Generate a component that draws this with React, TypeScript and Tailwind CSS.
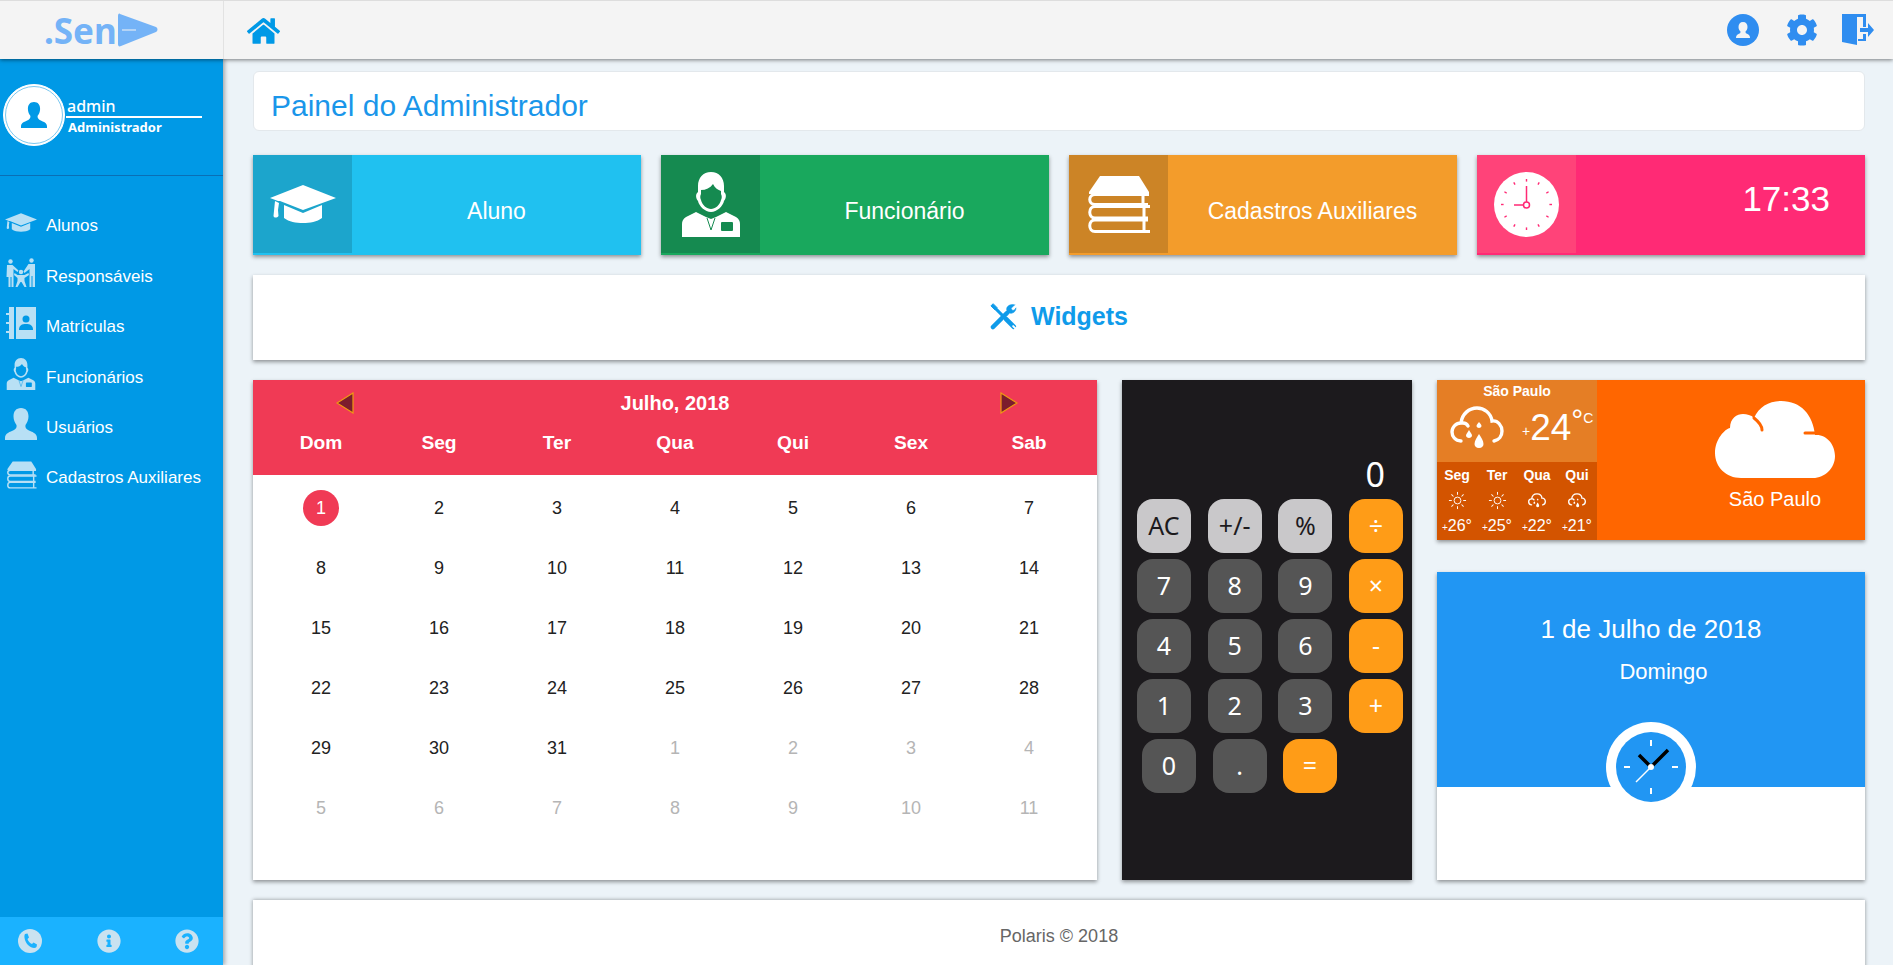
import { FaHome, FaCog, FaInfoCircle, FaQuestionCircle } from "react-icons/fa";

type IconProps = { className?: string };

function CapIcon({ className }: IconProps) {
  return (
    <svg viewBox="0 0 66 38" className={className} fill="currentColor">
      <path d="M33 0 66 13 33 25 10 16 8 16 0 13Z" />
      <path d="M5 16 9 18 8 25 8.5 31C7 33 4 33 3.5 31Z" />
      <path d="M14 20 33 28 52 20V33C47 37 40 38 33 38S19 37 14 33Z" />
    </svg>
  );
}

function FamilyIcon({ className }: IconProps) {
  return (
    <svg viewBox="0 0 31 30" className={className} fill="currentColor">
      <circle cx="5" cy="3.5" r="2.2" />
      <circle cx="26" cy="2.5" r="2.2" />
      <circle cx="15.5" cy="14" r="2.2" />
      <path d="M1.5 7H7L13 12.5 12 14 8 11V29H6V19H5V29H3V19H1Z" />
      <path d="M23 6H29.5V29H27V18H26V29H24V11L19 15 18 13.5Z" />
      <path d="M12 17H19L23 15 23.5 17 19 20V23L21 29H19L16 24H15L12 29H10L12 23V20L8.5 17 9 15Z" />
    </svg>
  );
}

function ContactBookIcon({ className }: IconProps) {
  return (
    <svg viewBox="0 0 30 32" className={className} fill="currentColor">
      <path d="M3 0H8V32H3V26H0V24H3V17H0V15H3V8H0V6H3Z" />
      <path d="M10 0H30V32H10Z" />
      <circle cx="20" cy="12" r="3.5" fill="#0099e6" />
      <path d="M13 23C13 18 16 17 20 17S27 18 27 23Z" fill="#0099e6" />
    </svg>
  );
}

function EmployeeIcon({ className, cut = "#0099e6" }: IconProps & { cut?: string }) {
  return (
    <svg viewBox="0 0 58 65" className={className} fill="currentColor">
      <path d="M29 0C21 0 16 6 16 14V20C13 22 14 27 16 29 17 34 23 40 29 40S41 34 42 29C44 27 45 22 42 20V14C42 6 37 0 29 0Z" />
      <path d="M19 18C24 18 28 16 31 12 33 16 36 18 39 19V22C40 24 40 26 39 28 38 33 33 37 29 37S20 33 19 28C18 26 18 24 19 22Z" fill={cut} />
      <path d="M14 40 24 45 29 47 34 45 44 40 54 45C57 47 58 49 58 52V65H0V52C0 49 1 47 4 45Z" />
      <path d="M25 46 27 52 29 58 31 52 33 46" fill="none" stroke={cut} strokeWidth="1" />
      <rect x="39" y="50" width="12" height="9" rx="1" fill={cut} />
    </svg>
  );
}

function UserIcon({ className }: IconProps) {
  return (
    <svg viewBox="0 0 32 32" className={className} fill="currentColor">
      <path d="M16 0C11 0 8.5 3.5 8.5 8.5 8.5 12 10 15 11.5 17 12 19 11 21 9 22 5 24 0 25 0 30V32H32V30C32 25 27 24 23 22 21 21 20 19 20.5 17 22 15 23.5 12 23.5 8.5 23.5 3.5 21 0 16 0Z" />
    </svg>
  );
}

function BooksIcon({ className }: IconProps) {
  return (
    <svg viewBox="0 0 65 57" className={className}>
      <path d="M14 0H53L63 16V18H3V16Z" fill="currentColor" />
      <g fill="none" stroke="currentColor" strokeWidth="3">
        <path d="M63 18.5H9C2 18.5 2 28.5 9 28.5H62M57 18.5V28.5" />
        <path d="M64 30.5H9C2 30.5 2 42 9 42H62M58 30.5V42" />
        <path d="M62 44H9C2 44 2 55.5 9 55.5H64M58 44V55.5" />
      </g>
    </svg>
  );
}

function TileClockIcon({ className }: IconProps) {
  const ticks = [0, 30, 60, 90, 120, 150, 180, 210, 240, 270, 300, 330];
  return (
    <svg viewBox="0 0 65 65" className={className}>
      <circle cx="32.5" cy="32.5" r="32.5" fill="#fff" />
      {ticks.map((t) => (
        <rect key={t} x="31.8" y="7" width="1.4" height="2.6" fill="#ff2a75" transform={`rotate(${t} 32.5 32.5)`} />
      ))}
      <path d="M32.5 14V31M32 33H20" stroke="#ff2a75" strokeWidth="1.5" />
      <circle cx="32.5" cy="33" r="3" fill="#fff" stroke="#ff2a75" strokeWidth="1.5" />
    </svg>
  );
}

function AccountIcon({ className }: IconProps) {
  return (
    <svg viewBox="0 0 32 32" className={className}>
      <circle cx="16" cy="16" r="16" fill="currentColor" />
      <path d="M16 8C13 8 11.5 10 11.5 13 11.5 15 12.5 16.5 13.5 17.5 13.5 19 13 19.5 11.5 20 9.5 21 9 22 9 24H23C23 22 22.5 21 20.5 20 19 19.5 18.5 19 18.5 17.5 19.5 16.5 20.5 15 20.5 13 20.5 10 19 8 16 8Z" fill="#f4f4f4" />
    </svg>
  );
}

function DoorIcon({ className }: IconProps) {
  return (
    <svg viewBox="0 0 32 32" className={className} fill="currentColor">
      <path d="M0 0H24V13H21V3H15V31L0 28Z" />
      <path d="M21 20H24V27H16V25H21Z" />
      <path d="M18 14H26V9L32 16 26 23V18H18Z" />
    </svg>
  );
}

function PhoneCircleIcon({ className }: IconProps) {
  return (
    <svg viewBox="0 0 24 24" className={className}>
      <circle cx="12" cy="12" r="12" fill="currentColor" />
      <path d="M7 5 9.5 4.5 11 8.5 9.5 10C10 12 12 14.5 14 15L15.5 13.5 19 15.5 18.5 18C17 20 13 19 10 16S5.5 7 7 5Z" fill="#1ab2ff" />
    </svg>
  );
}

function ToolsIcon({ className }: IconProps) {
  return (
    <svg viewBox="0 0 28 28" className={className} fill="none" stroke="currentColor" strokeLinecap="round">
      <path d="M3 25 17.5 10.5" strokeWidth="4.5" />
      <path d="M3 3 24 24" strokeWidth="3" />
      <path d="M3 1 1 3 5 7 7 5Z" fill="currentColor" strokeWidth="1" />
      <path d="M25.5 2 22 5.5 23 7.5 25 7.5 27 5C27 9 23.5 11.5 20 10.5 17 9.5 16.5 6 18 4 20 1.5 23 1 25.5 2Z" fill="currentColor" strokeWidth="0.5" />
      <path d="M17 17 24.5 24.5" strokeWidth="5" />
      <path d="M24 24 26.5 26.5" stroke="#fff" strokeWidth="2" />
    </svg>
  );
}

function RainCloud({ className, thick = 3.4 }: IconProps & { thick?: number }) {
  return (
    <svg viewBox="0 0 54 44" className={className} fill="none" stroke="currentColor" strokeWidth={thick} strokeLinecap="round">
      <path d="M11 35C5 35 2 30 2 26 2 21 6 17 11 17 12 8 19 2 27 2 34 2 41 7 42 15 48 14 52 20 52 25 52 30 49 34 44 35" />
      <path d="M13 17C15 17 17 18 18 20" />
      <path d="M29 42C26 42 24.5 40 24.5 38 24.5 35 27 31 29 28 31 31 33.5 35 33.5 38 33.5 40 32 42 29 42Z" fill="currentColor" stroke="none" />
      <path d="M19 32C17.5 32 16 31 16 29.5 16 28 18 26 19 24 20 26 22 28 22 29.5 22 31 20.5 32 19 32Z" fill="currentColor" stroke="none" />
      <path d="M29 22C28 22 26.5 21 26.5 20 26.5 19 28 17 29 16 30 17 31.5 19 31.5 20 31.5 21 30 22 29 22Z" fill="currentColor" stroke="none" />
    </svg>
  );
}

function SunIcon({ className }: IconProps) {
  const rays = [0, 45, 90, 135, 180, 225, 270, 315];
  return (
    <svg viewBox="0 0 20 20" className={className} fill="none" stroke="currentColor" strokeWidth="1">
      <circle cx="10" cy="10" r="3.6" />
      {rays.map((r) => (
        <path key={r} d="M10 1V4" transform={`rotate(${r} 10 10)`} />
      ))}
    </svg>
  );
}

function Triangle({ right }: { right?: boolean }) {
  return (
    <svg viewBox="0 0 18 22" className="h-[22px] w-[18px]">
      <path
        d={right ? "M1 1 17 11 1 21Z" : "M17 1 1 11 17 21Z"}
        fill="#7b1c2d"
        stroke="#ef9a12"
        strokeWidth="1.2"
      />
    </svg>
  );
}

const NAV = [
  { label: "Alunos", icon: <CapIcon className="h-[19px] w-[32px]" /> },
  { label: "Responsáveis", icon: <FamilyIcon className="h-[30px] w-[32px]" /> },
  { label: "Matrículas", icon: <ContactBookIcon className="h-[32px] w-[30px]" /> },
  { label: "Funcionários", icon: <EmployeeIcon className="h-[32px] w-[30px]" /> },
  { label: "Usuários", icon: <UserIcon className="h-[32px] w-[32px]" /> },
  { label: "Cadastros Auxiliares", icon: <BooksIcon className="h-[28px] w-[31px]" /> },
];

const WEEK = ["Dom", "Seg", "Ter", "Qua", "Qui", "Sex", "Sab"];

const DAYS = [
  ...Array.from({ length: 31 }, (_, i) => ({ n: i + 1, muted: false })),
  ...Array.from({ length: 11 }, (_, i) => ({ n: i + 1, muted: true })),
];

const FORECAST = [
  { day: "Seg", temp: "26", sun: true },
  { day: "Ter", temp: "25", sun: true },
  { day: "Qua", temp: "22", sun: false },
  { day: "Qui", temp: "21", sun: false },
];

const CALC_ROWS = [
  [
    { t: "AC", c: "light" },
    { t: "+/-", c: "light" },
    { t: "%", c: "light" },
    { t: "÷", c: "op" },
  ],
  [
    { t: "7", c: "num" },
    { t: "8", c: "num" },
    { t: "9", c: "num" },
    { t: "×", c: "op" },
  ],
  [
    { t: "4", c: "num" },
    { t: "5", c: "num" },
    { t: "6", c: "num" },
    { t: "-", c: "op" },
  ],
  [
    { t: "1", c: "num" },
    { t: "2", c: "num" },
    { t: "3", c: "num" },
    { t: "+", c: "op" },
  ],
];

function CalcButton({ t, c }: { t: string; c: string }) {
  const tone =
    c === "light"
      ? "bg-[#c9c8ca] text-[#1c1a1d]"
      : c === "op"
        ? "bg-[#ff9c17] text-white"
        : "bg-[#555555] text-white";
  return (
    <button className={`flex h-[54px] w-[54px] items-center justify-center rounded-[16px] text-[25px] ${tone}`}>
      {t}
    </button>
  );
}

export default function App() {
  return (
    <div className="flex h-[965px] flex-col overflow-hidden bg-[#ecf3f8] font-['Liberation_Sans',sans-serif]">
      {/* Top bar */}
      <header className="relative z-20 flex h-[59px] shrink-0 items-center border-t border-[#dddddd] bg-[#f4f4f4] shadow-[0_1px_4px_rgba(0,0,0,0.5)]">
        <div className="flex h-full w-[224px] shrink-0 items-center border-r border-[#e2e2e2] pl-[44px]">
          <span className="font-['Noto_Sans',sans-serif] text-[35px] leading-none font-bold text-[#74b3f7]">.Sen</span>
          <svg viewBox="0 0 40 34" className="ml-[1px] h-[34px] w-[40px]">
            <path d="M2 1 38 14C40 15 40 18 38 19L3 33C1 34 0 33 0 31V3C0 1 1 0 2 1Z" fill="#74b3f7" />
            <path d="M4 17H18" stroke="#f4f4f4" strokeWidth="1" />
          </svg>
        </div>
        <FaHome className="mt-[2px] ml-[23px] h-[30px] w-[33px] text-[#0099e6]" />
        <div className="ml-auto flex items-center pr-[19px] text-[#2f8df0]">
          <AccountIcon className="h-[32px] w-[32px]" />
          <FaCog className="ml-[27px] h-[32px] w-[32px]" />
          <DoorIcon className="ml-[24px] h-[32px] w-[32px]" />
        </div>
      </header>

      <div className="flex min-h-0 flex-1">
        {/* Sidebar */}
        <aside className="z-10 flex w-[223px] shrink-0 flex-col bg-[#0099e6] shadow-[2px_0_4px_rgba(0,0,0,0.3)]">
          <div className="flex h-[117px] shrink-0 items-start border-b border-[#0a6fb5] pt-[25px] pl-[3px]">
            <div className="flex h-[62px] w-[62px] items-center justify-center rounded-full border border-white bg-white outline outline-1 -outline-offset-3 outline-[#7cc8f0]">
              <UserIcon className="h-[28px] w-[26px] text-[#0099e6]" />
            </div>
            <div className="ml-[1px] w-[136px] pt-[12px] font-['Noto_Sans',sans-serif] text-white">
              <div className="border-b-2 border-white pl-[1px] text-[16px] leading-[20px] font-medium">admin</div>
              <div className="pl-[2px] text-[13px] leading-[18px] font-bold">Administrador</div>
            </div>
          </div>
          <nav className="mt-[25px] flex-1">
            {NAV.map((item) => (
              <div key={item.label} className="flex h-[50.4px] items-center">
                <div className="-mt-[7px] flex w-[46px] shrink-0 justify-center pr-[6px] pl-[2px] text-[#b8e0f5]">{item.icon}</div>
                <span className="text-[17px] text-white">{item.label}</span>
              </div>
            ))}
          </nav>
          <div className="flex h-[48px] shrink-0 items-center justify-between bg-[#1ab2ff] pr-[24px] pl-[18px] text-[#c9e2f0]">
            <PhoneCircleIcon className="h-[24px] w-[24px]" />
            <FaInfoCircle className="h-[24px] w-[24px]" />
            <FaQuestionCircle className="h-[24px] w-[24px]" />
          </div>
        </aside>

        {/* Main */}
        <main className="min-w-0 flex-1 pt-[12px] pr-[28px] pl-[30px]">
          <div className="flex h-[60px] items-center rounded-[6px] border border-[#e3e8ec] bg-white pt-[8px] pl-[17px] text-[30px] text-[#1a96ea]">
            Painel do Administrador
          </div>

          <div className="mt-[24px] grid grid-cols-4 gap-5">
            <div className="flex h-[100px] bg-[#20c1f0] shadow-[0_2px_4px_rgba(0,0,0,0.4)]">
              <div className="flex h-[98px] w-[99px] items-center justify-center bg-[#1ca5cc] text-white">
                <CapIcon className="h-[38px] w-[66px]" />
              </div>
              <div className="flex flex-1 items-center justify-center pt-[12px] text-[23px] text-white">Aluno</div>
            </div>
            <div className="flex h-[100px] bg-[#19a85d] shadow-[0_2px_4px_rgba(0,0,0,0.4)]">
              <div className="flex h-[98px] w-[99px] items-center justify-center bg-[#158a50] text-white">
                <EmployeeIcon className="h-[65px] w-[58px]" cut="#158a50" />
              </div>
              <div className="flex flex-1 items-center justify-center pt-[12px] text-[23px] text-white">Funcionário</div>
            </div>
            <div className="flex h-[100px] bg-[#f39c2b] shadow-[0_2px_4px_rgba(0,0,0,0.4)]">
              <div className="flex h-[98px] w-[99px] items-center justify-center bg-[#cc8426] text-white">
                <BooksIcon className="h-[57px] w-[65px]" />
              </div>
              <div className="flex flex-1 items-center justify-center pt-[12px] text-[23px] text-white">Cadastros Auxiliares</div>
            </div>
            <div className="flex h-[100px] bg-[#ff2a75] shadow-[0_2px_4px_rgba(0,0,0,0.4)]">
              <div className="flex h-[98px] w-[99px] items-center justify-center bg-[#ff4379]">
                <TileClockIcon className="h-[65px] w-[65px]" />
              </div>
              <div className="flex flex-1 items-center justify-end pr-[35px] pb-[12px] text-[35px] text-white">17:33</div>
            </div>
          </div>

          <div className="mt-[20px] flex h-[85px] items-center justify-center gap-[14px] bg-white pb-[2px] text-[25px] font-bold text-[#0f9bea] shadow-[0_2px_4px_rgba(0,0,0,0.4)]">
            <ToolsIcon className="h-[27px] w-[27px]" />
            Widgets
          </div>

          <div className="mt-[20px] flex h-[500px] gap-[25px]">
            {/* Calendar */}
            <div className="w-[844px] shrink-0 bg-white shadow-[0_2px_4px_rgba(0,0,0,0.4)]">
              <div className="h-[95px] bg-[#f03a55] px-[9px] text-white">
                <div className="flex h-[46px] items-center justify-between pr-[70px] pl-[74px]">
                  <Triangle />
                  <span className="mr-[4px] text-[20px] font-bold">Julho, 2018</span>
                  <Triangle right />
                </div>
                <div className="grid grid-cols-7 pt-[2px]">
                  {WEEK.map((d) => (
                    <div key={d} className="text-center text-[19.2px] leading-[30px] font-bold">
                      {d}
                    </div>
                  ))}
                </div>
              </div>
              <div className="grid grid-cols-7 px-[9px] pt-[3px]">
                {DAYS.map((d, i) => (
                  <div key={i} className="flex h-[60px] items-center justify-center">
                    <span
                      className={`flex h-[36px] w-[36px] items-center justify-center rounded-full text-[18px] ${
                        i === 0 ? "bg-[#f03a55] text-white" : d.muted ? "text-[#b5b5b5]" : "text-[#222222]"
                      }`}
                    >
                      {d.n}
                    </span>
                  </div>
                ))}
              </div>
            </div>

            {/* Calculator */}
            <div className="w-[290px] shrink-0 bg-[#1c1a1d] font-['Noto_Sans',sans-serif] shadow-[0_2px_4px_rgba(0,0,0,0.4)]">
              <div className="flex h-[119px] items-end justify-end pr-[27px] pb-[2px] text-[34px] leading-[46px] text-white">0</div>
              <div className="flex flex-col gap-[6px] pr-[9px] pl-[15px]">
                {CALC_ROWS.map((row, i) => (
                  <div key={i} className="flex justify-between">
                    {row.map((b) => (
                      <CalcButton key={b.t} t={b.t} c={b.c} />
                    ))}
                  </div>
                ))}
                <div className="flex gap-[16.5px] pl-[5px]">
                  <CalcButton t="0" c="num" />
                  <CalcButton t="." c="num" />
                  <CalcButton t="=" c="op" />
                </div>
              </div>
            </div>

            {/* Right column */}
            <div className="flex min-w-0 flex-1 flex-col gap-[32px]">
              <div className="flex h-[160px] shrink-0 bg-[#ff6600] text-white shadow-[0_2px_4px_rgba(0,0,0,0.4)]">
                <div className="w-[160px] shrink-0">
                  <div className="h-[82px] bg-[#e57e25]">
                    <div className="pt-[3px] text-center text-[14px] leading-[16px] font-bold">São Paulo</div>
                    <div className="flex items-start pt-[7px] pl-[13px]">
                      <RainCloud className="h-[44px] w-[54px]" />
                      <span className="mt-[17px] ml-[18px] text-[14px] leading-[16px]">+</span>
                      <span className="text-[37px] leading-[44px]">24</span>
                      <span className="-mt-[1px] text-[30px] leading-[30px]">°</span>
                      <span className="mt-[4px] text-[14px] leading-[16px] font-light">C</span>
                    </div>
                  </div>
                  <div className="grid h-[78px] grid-cols-4 bg-[#d35400]">
                    {FORECAST.map((f) => (
                      <div key={f.day} className="flex flex-col items-center pt-[5px]">
                        <span className="text-[14px] leading-[16px] font-bold">{f.day}</span>
                        <div className="flex h-[24px] items-center pt-[10px]">
                          {f.sun ? <SunIcon className="h-[19px] w-[19px]" /> : <RainCloud className="h-[15px] w-[18px]" thick={4} />}
                        </div>
                        <span className="mt-[10px] text-[16px] leading-[18px]">
                          <span className="text-[10px]">+</span>
                          {f.temp}°
                        </span>
                      </div>
                    ))}
                  </div>
                </div>
                <div className="flex flex-1 flex-col items-center pt-[21px] pl-[88px]">
                  <svg viewBox="0 0 120 77" className="h-[77px] w-[120px]">
                    <path d="M26 77C11 77 0 66 0 52 0 38 10 28 15 27 15 17 22 13 28 13 32 13 36 14 39 17 44 6 54 0 66 0 86 0 98 14 100 34 112 33 120 44 120 55 120 67 110 77 98 77Z" fill="#fff" />
                    <path d="M39 17C44 21 47 25 47 29M90 32H100" stroke="#ff6600" strokeWidth="3" strokeLinecap="round" fill="none" />
                  </svg>
                  <div className="mt-[7px] text-[20px] leading-[28px]">São Paulo</div>
                </div>
              </div>

              <div className="relative flex-1 bg-white shadow-[0_2px_4px_rgba(0,0,0,0.4)]">
                <div className="h-[215px] bg-[#2196f3] pt-[41px] text-center text-white">
                  <div className="text-[26px] leading-[32px]">1 de Julho de 2018</div>
                  <div className="mt-[14px] pl-[25px] text-[22px] leading-[26px]">Domingo</div>
                </div>
                {/* clock sits over the blue/white edge */}
                <div className="absolute top-[150px] left-[169px] h-[90px] w-[90px]">
                  <svg viewBox="0 0 90 90" className="h-[90px] w-[90px]">
                    <circle cx="45" cy="45" r="45" fill="#fff" />
                    <circle cx="45" cy="45" r="35" fill="#2196f3" />
                    <path d="M45 18V24M45 66V72M18 45H24M66 45H72" stroke="#fff" strokeWidth="2" />
                    <path d="M45 45 33 33M45 45 62 28" stroke="#000" strokeWidth="3.5" />
                    <path d="M45 45 30 60" stroke="#fff" strokeWidth="1.5" />
                    <circle cx="45" cy="45" r="3" fill="#fff" />
                  </svg>
                </div>
              </div>
            </div>
          </div>

          <div className="mt-[20px] flex h-[80px] items-start justify-center bg-white pt-[24px] text-[18px] leading-[24px] text-[#666666] shadow-[0_0_4px_rgba(0,0,0,0.4)]">
            Polaris © 2018
          </div>
        </main>
      </div>
    </div>
  );
}
